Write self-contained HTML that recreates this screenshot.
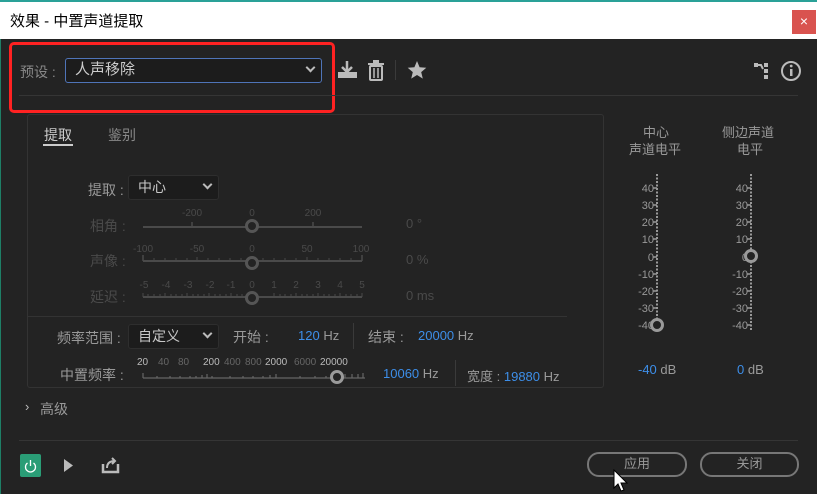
<!DOCTYPE html>
<html><head><meta charset="utf-8"><style>
*{margin:0;padding:0;box-sizing:border-box}
body{width:817px;height:494px;background:#232323;position:relative;overflow:hidden;font-family:"Liberation Sans","Noto Sans CJK SC",sans-serif;color:#9a9a9a;font-size:13px}
.a{position:absolute;white-space:nowrap}
.blue{color:#3d8ee8}
.dim{color:#4a4a4a}
.t{position:absolute;font-size:10px;color:#4a4a4a;transform:translateX(-50%);white-space:nowrap}
.dd{position:absolute;background:#1c1c1c;border:1px solid #2e2e2e;border-radius:3px;color:#c8c8c8;font-size:14px;padding-left:9px}
.chev{position:absolute;right:7px;top:5px;width:7px;height:7px;border-right:2px solid #bbb;border-bottom:2px solid #bbb;transform:rotate(45deg)}
.knob{position:absolute;width:14px;height:14px;border:3px solid #9a9a9a;border-radius:50%;background:#232323}
.btn{position:absolute;border:2px solid #777;border-radius:12px;color:#999;text-align:center;font-size:13px;line-height:20px}
</style></head><body>
<div class="a" style="left:0;top:0;width:817px;height:2px;background:#2aa198"></div>
<div class="a" style="left:0;top:2px;width:817px;height:37px;background:#fff"></div>
<div class="a" style="left:10px;top:10px;color:#000;font-size:15px">效果 - 中置声道提取</div>
<div class="a" style="left:792px;top:10px;width:24px;height:24px;background:#d9534f;color:#fff;text-align:center;line-height:23px;font-size:14px">×</div>
<div class="a" style="left:0;top:39px;width:1px;height:455px;background:#1e7f66"></div>

<div class="a" style="left:9px;top:42px;width:326px;height:71px;border:3px solid #f22;border-radius:5px"></div>
<div class="a" style="left:20px;top:62px;font-size:14px;color:#888">预设 :</div>
<div class="dd" style="left:65px;top:58px;width:257px;height:25px;border:1px solid #4f74b8;line-height:22px;font-size:15px;color:#ccc">人声移除<span class="chev"></span></div>
<div class="a" style="left:19px;top:95px;width:779px;height:1px;background:#353535"></div>
<svg class="a" style="left:337px;top:58px" width="100" height="26">
<path d="M10 3v10M5 9l5 5 5-5" stroke="#bbb" stroke-width="2.5" fill="none"/><rect x="1" y="14" width="19" height="6" fill="#bbb"/>
<rect x="33" y="8" width="12" height="14" rx="1" fill="none" stroke="#bbb" stroke-width="2"/><rect x="31" y="5" width="16" height="2" fill="#bbb"/><rect x="36" y="2" width="6" height="3" fill="#bbb"/><path d="M37 10v10M41 10v10" stroke="#bbb" stroke-width="1.5"/>
<rect x="58" y="2" width="1" height="20" fill="#3a3a3a"/>
<path d="M80 3l2.6 6.2 6.7.5-5.1 4.4 1.6 6.5L80 17l-5.8 3.6 1.6-6.5-5.1-4.4 6.7-.5z" fill="#bbb"/>
</svg>
<svg class="a" style="left:752px;top:60px" width="50" height="22">
<rect x="2" y="3" width="4" height="4" fill="#bbb"/><path d="M6 5h3l2 4" stroke="#bbb" stroke-width="2" fill="none"/><rect x="12" y="3" width="4" height="4" fill="#bbb"/><rect x="12" y="9" width="4" height="4" fill="#bbb"/><rect x="12" y="15" width="4" height="4" fill="#bbb"/>
<circle cx="39" cy="11" r="9" stroke="#bbb" stroke-width="2" fill="none"/><rect x="38" y="9" width="2.5" height="7" fill="#bbb"/><circle cx="39.2" cy="6" r="1.4" fill="#bbb"/>
</svg>

<div class="a" style="left:27px;top:114px;width:577px;height:274px;border:1px solid #333;border-radius:3px"></div>
<div class="a" style="left:44px;top:125px;font-size:14px;color:#ccc">提取</div>
<div class="a" style="left:43px;top:144px;width:30px;height:2px;background:#ccc"></div>
<div class="a" style="left:108px;top:125px;font-size:14px;color:#888">鉴别</div>

<div class="a" style="left:88px;top:180px;font-size:14px;color:#999">提取 :</div>
<div class="dd" style="left:128px;top:175px;width:91px;height:25px;line-height:23px">中心<span class="chev"></span></div>

<div class="a dim" style="left:90px;top:216px;font-size:14px">相角 :</div>
<div class="a dim" style="left:90px;top:251px;font-size:14px">声像 :</div>
<div class="a dim" style="left:90px;top:287px;font-size:14px">延迟 :</div>
<span class="t" style="left:192px;top:208px">-200</span><span class="t" style="left:252px;top:208px">0</span><span class="t" style="left:313px;top:208px">200</span>
<span class="t" style="left:143px;top:244px">-100</span><span class="t" style="left:197px;top:244px">-50</span><span class="t" style="left:252px;top:244px">0</span><span class="t" style="left:307px;top:244px">50</span><span class="t" style="left:361px;top:244px">100</span>
<span class="t" style="left:144px;top:280px">-5</span><span class="t" style="left:166px;top:280px">-4</span><span class="t" style="left:188px;top:280px">-3</span><span class="t" style="left:210px;top:280px">-2</span><span class="t" style="left:231px;top:280px">-1</span><span class="t" style="left:252px;top:280px">0</span><span class="t" style="left:274px;top:280px">1</span><span class="t" style="left:296px;top:280px">2</span><span class="t" style="left:318px;top:280px">3</span><span class="t" style="left:340px;top:280px">4</span><span class="t" style="left:362px;top:280px">5</span>
<svg class="a" style="left:140px;top:216px" width="225" height="90">
<g stroke="#4a4a4a" stroke-width="2">
<path d="M3 11h219M3 45h219M3 81h219"/>
<path d="M52 6v5M112 6v5M173 6v5M3 39v6M222 39v6" stroke-width="1.5"/>
</g>
<g stroke="#4a4a4a" stroke-width="1">
<path d="M3 42v3M14 42v3M25 42v3M36 42v3M47 42v3M57 41v4M68 42v3M79 42v3M90 42v3M101 42v3M123 42v3M134 42v3M145 42v3M156 42v3M167 41v4M178 42v3M189 42v3M200 42v3M211 42v3"/>
<path d="M3 77v4M8 78v3M14 78v3M20 78v3M25 77v4M31 78v3M36 78v3M42 78v3M47 77v4M53 78v3M58 78v3M64 78v3M69 77v4M75 78v3M80 78v3M86 78v3M91 77v4M97 78v3M102 78v3M134 77v4M140 78v3M145 78v3M151 78v3M156 77v4M162 78v3M167 78v3M173 78v3M178 77v4M184 78v3M189 78v3M195 78v3M200 77v4M206 78v3M211 78v3M217 78v3M222 77v4"/>
</g>
</svg>
<div class="knob" style="left:245px;top:219px;border-color:#555"></div>
<div class="knob" style="left:245px;top:256px;border-color:#555"></div>
<div class="knob" style="left:245px;top:291px;border-color:#555"></div>
<div class="a dim" style="left:406px;top:216px;font-size:13px">0 °</div>
<div class="a dim" style="left:406px;top:252px;font-size:13px">0 %</div>
<div class="a dim" style="left:406px;top:288px;font-size:13px">0 ms</div>
<div class="a" style="left:27px;top:316px;width:540px;height:1px;background:#333"></div>

<div class="a" style="left:57px;top:328px;font-size:14px;color:#999">频率范围 :</div>
<div class="dd" style="left:128px;top:324px;width:91px;height:25px;line-height:23px">自定义<span class="chev"></span></div>
<div class="a" style="left:233px;top:327px;font-size:14px;color:#999">开始 :</div>
<div class="a" style="left:298px;top:328px"><span class="blue">120</span> Hz</div>
<div class="a" style="left:353px;top:323px;width:1px;height:26px;background:#3a3a3a"></div>
<div class="a" style="left:368px;top:327px;font-size:14px;color:#999">结束 :</div>
<div class="a" style="left:418px;top:328px"><span class="blue">20000</span> Hz</div>

<div class="a" style="left:60px;top:365px;font-size:14px;color:#999">中置频率 :</div>
<div class="a" style="left:137px;top:357px;font-size:10px;color:#666">
<span style="position:absolute;left:0;color:#bbb">20</span><span style="position:absolute;left:21px">40</span><span style="position:absolute;left:41px">80</span><span style="position:absolute;left:66px;color:#bbb">200</span><span style="position:absolute;left:87px">400</span><span style="position:absolute;left:108px">800</span><span style="position:absolute;left:128px;color:#bbb">2000</span><span style="position:absolute;left:157px">6000</span><span style="position:absolute;left:183px;color:#bbb">20000</span></div>
<svg class="a" style="left:140px;top:368px" width="225" height="14">
<g stroke="#666" stroke-width="1.2"><path d="M3 10h222M3 5v5M17 8v2M30 8v2M40 8v2M50 8v2M56 8v2M62 7v3M67 6v4M72 8v2M90 8v2M103 8v2M113 8v2M123 8v2M130 7v3M136 6v4M160 8v2M175 8v2M186 8v2M205 6v4M212 6v4M218 6v4M223 5v5"/></g>
</svg>
<div class="knob" style="left:330px;top:370px"></div>
<div class="a" style="left:383px;top:366px"><span class="blue">10060</span> Hz</div>
<div class="a" style="left:455px;top:360px;width:1px;height:26px;background:#3a3a3a"></div>
<div class="a" style="left:467px;top:366px"><span style="color:#999">宽度 :</span> <span class="blue">19880</span> Hz</div>

<div class="a" style="left:643px;top:122px;font-size:13px;color:#999">中心</div>
<div class="a" style="left:629px;top:139px;font-size:13px;color:#999">声道电平</div>
<div class="a" style="left:722px;top:122px;font-size:13px;color:#999">侧边声道</div>
<div class="a" style="left:737px;top:139px;font-size:13px;color:#999">电平</div>
<svg class="a" style="left:600px;top:170px" width="217" height="180" font-family="Liberation Sans" font-size="11" fill="#999">
<path d="M57 4v156M151 4v156" stroke="#999" stroke-width="2" stroke-dasharray="2 1.5"/>
<g text-anchor="end">
<text x="54" y="22">40</text><text x="54" y="39">30</text><text x="54" y="56">20</text><text x="54" y="73">10</text><text x="54" y="91">0</text><text x="54" y="108">-10</text><text x="54" y="125">-20</text><text x="54" y="142">-30</text><text x="54" y="159">-40</text>
<text x="148" y="22">40</text><text x="148" y="39">30</text><text x="148" y="56">20</text><text x="148" y="73">10</text><text x="148" y="91">0</text><text x="148" y="108">-10</text><text x="148" y="125">-20</text><text x="148" y="142">-30</text><text x="148" y="159">-40</text>
</g>
<g stroke="#999" stroke-width="1.5"><path d="M53 18h4M53 35h4M53 52h4M53 69h4M53 87h4M53 104h4M53 121h4M53 138h4M147 18h4M147 35h4M147 52h4M147 69h4M147 87h4M147 104h4M147 121h4M147 138h4M147 155h4"/></g>
</svg>
<div class="knob" style="left:650px;top:318px"></div>
<div class="knob" style="left:744px;top:249px"></div>
<div class="a" style="left:638px;top:362px"><span class="blue">-40</span> dB</div>
<div class="a" style="left:737px;top:362px"><span class="blue">0</span> dB</div>

<div class="a" style="left:25px;top:399px;font-size:13px;color:#bbb">›</div>
<div class="a" style="left:40px;top:399px;font-size:14px;color:#999">高级</div>
<div class="a" style="left:19px;top:440px;width:779px;height:1px;background:#353535"></div>

<div class="a" style="left:20px;top:454px;width:21px;height:23px;background:#2a9d76;border-radius:2px"></div>
<svg class="a" style="left:20px;top:454px" width="100" height="23">
<path d="M7.5 9a5 5 0 1 0 6 0" stroke="#fff" stroke-width="1.3" fill="none"/><path d="M10.5 6v6" stroke="#fff" stroke-width="1.3"/>
<path d="M44 5l9 6.5-9 6.5z" fill="#bbb"/>
<path d="M83 10v8h15v-8" stroke="#bbb" stroke-width="2.5" fill="none"/><path d="M87 14c0-5 3-7 8-7M92 4l3 3-3 3" stroke="#bbb" stroke-width="2" fill="none"/>
</svg>
<div class="btn" style="left:587px;top:452px;width:100px;height:25px">应用</div>
<div class="btn" style="left:700px;top:452px;width:99px;height:25px">关闭</div>
<svg class="a" style="left:613px;top:469px" width="16" height="25"><path d="M1 1v18l4-4 3 7 3-1-3-7h6z" fill="#fff" stroke="#000" stroke-width="1"/></svg>
</body></html>
